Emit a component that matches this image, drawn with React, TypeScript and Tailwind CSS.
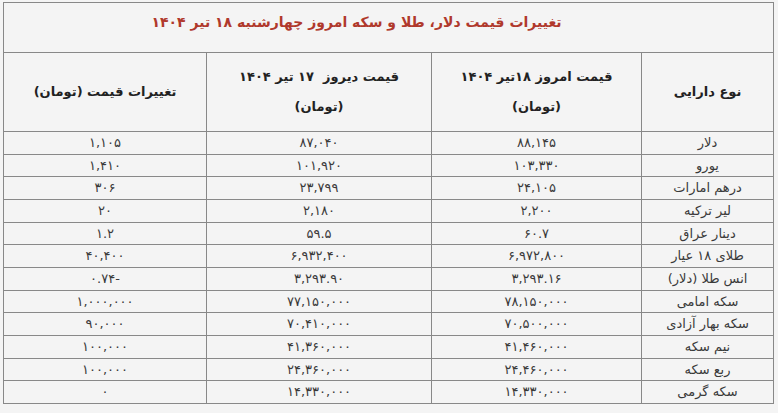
import React from "react"

interface Row {
  name: string
  today: string
  yesterday: string
  change: string
}

const rows: Row[] = [
  { name: "دلار", today: "۸۸,۱۴۵", yesterday: "۸۷,۰۴۰", change: "۱,۱۰۵" },
  { name: "یورو", today: "۱۰۳,۳۳۰", yesterday: "۱۰۱,۹۲۰", change: "۱,۴۱۰" },
  { name: "درهم امارات", today: "۲۴,۱۰۵", yesterday: "۲۳,۷۹۹", change: "۳۰۶" },
  { name: "لیر ترکیه", today: "۲,۲۰۰", yesterday: "۲,۱۸۰", change: "۲۰" },
  { name: "دینار عراق", today: "۶۰.۷", yesterday: "۵۹.۵", change: "۱.۲" },
  { name: "طلای ۱۸ عیار", today: "۶,۹۷۲,۸۰۰", yesterday: "۶,۹۳۲,۴۰۰", change: "۴۰,۴۰۰" },
  { name: "انس طلا (دلار)", today: "۳,۲۹۳.۱۶", yesterday: "۳,۲۹۳.۹۰", change: "-۰.۷۴" },
  { name: "سکه امامی", today: "۷۸,۱۵۰,۰۰۰", yesterday: "۷۷,۱۵۰,۰۰۰", change: "۱,۰۰۰,۰۰۰" },
  { name: "سکه بهار آزادی", today: "۷۰,۵۰۰,۰۰۰", yesterday: "۷۰,۴۱۰,۰۰۰", change: "۹۰,۰۰۰" },
  { name: "نیم سکه", today: "۴۱,۴۶۰,۰۰۰", yesterday: "۴۱,۳۶۰,۰۰۰", change: "۱۰۰,۰۰۰" },
  { name: "ربع سکه", today: "۲۴,۴۶۰,۰۰۰", yesterday: "۲۴,۳۶۰,۰۰۰", change: "۱۰۰,۰۰۰" },
  { name: "سکه گرمی", today: "۱۴,۳۳۰,۰۰۰", yesterday: "۱۴,۳۳۰,۰۰۰", change: "۰" },
]

const cell = "border border-[#888888] text-center align-middle p-0"

export default function App() {
  return (
    <div
      className="min-h-[413px] w-[778px] bg-[#f4f4f4] pt-[2px] pl-[3px]"
      style={{ fontFamily: '"DejaVu Sans", sans-serif' }}
    >
      <table dir="rtl" className="w-[770px] table-fixed border-collapse text-[13px] text-[#3a3a3a]">
        <colgroup>
          <col className="w-[132px]" />
          <col className="w-[210px]" />
          <col className="w-[225px]" />
          <col className="w-[203px]" />
        </colgroup>
        <tbody>
          <tr className="h-[50px]">
            <td
              colSpan={4}
              className={`${cell} whitespace-nowrap pb-[10px] pr-[64px] text-[14px] font-bold text-[#b0392c]`}
            >
              تغییرات قیمت دلار، طلا و سکه امروز چهارشنبه ۱۸ تیر ۱۴۰۴
            </td>
          </tr>
          <tr className="h-[79px] font-bold text-[#222222]">
            <td className={cell}>نوع دارایی</td>
            <td className={`${cell} leading-[30px]`}>
              <div>قیمت امروز ۱۸تیر ۱۴۰۴</div>
              <div>(تومان)</div>
            </td>
            <td className={`${cell} leading-[30px]`}>
              <div>قیمت دیروز&nbsp; ۱۷ تیر ۱۴۰۴</div>
              <div>(تومان)</div>
            </td>
            <td className={cell}>تغییرات قیمت (تومان)</td>
          </tr>
          {rows.map((r) => (
            <tr key={r.name} className="h-[22.67px]">
              <td className={cell}>{r.name}</td>
              <td className={cell}>{r.today}</td>
              <td className={cell}>{r.yesterday}</td>
              <td className={cell}>{r.change}</td>
            </tr>
          ))}
        </tbody>
      </table>
    </div>
  )
}
